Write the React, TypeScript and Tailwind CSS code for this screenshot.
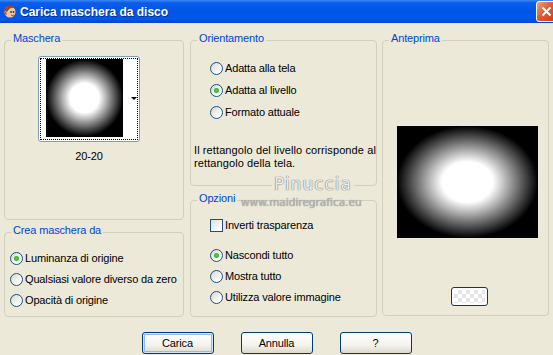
import React from "react";

function Radio({ checked }: { checked?: boolean }) {
  return (
    <span className="flex h-[13px] w-[13px] shrink-0 items-center justify-center rounded-full border border-[#1C5180] bg-[linear-gradient(135deg,#D6D6CF,#FFFFFF_80%)]">
      {checked && <span className="h-[5px] w-[5px] rounded-full bg-[radial-gradient(circle,#55D055,#21A121)]" />}
    </span>
  );
}

function Option({ label, checked, h = "h-[21px]" }: { label: string; checked?: boolean; h?: string }) {
  return (
    <div className={"flex items-center gap-[2px] " + h}>
      <Radio checked={checked} />
      <span className="whitespace-nowrap">{label}</span>
    </div>
  );
}

function Group({ title, className, children }: { title: string; className: string; children?: React.ReactNode }) {
  return (
    <fieldset className={"min-w-0 rounded-[4px] border border-[#D0D0BF] " + className}>
      <legend className="ml-[6px] px-[2px] pb-[3px] leading-[13px] text-[#0046D5]">{title}</legend>
      {children}
    </fieldset>
  );
}

function XpButton({ label, primary }: { label: string; primary?: boolean }) {
  return (
    <button
      className={
        "h-[22px] w-[72px] rounded-[3px] border border-[#003C74] bg-[linear-gradient(180deg,#FFFFFF,#F4F3EE_60%,#DCD8CC)] leading-[13px] " +
        (primary ? "shadow-[inset_0_0_0_1px_#CEE7FF,inset_0_0_0_2px_#98B8EA]" : "")
      }
    >
      {label}
    </button>
  );
}

function AppIcon() {
  return (
    <svg width="15" height="15" viewBox="0 0 15 15">
      <circle cx="8" cy="8" r="5.5" fill="#F3C7A0" />
      <path d="M2 6 C3 1 10 0 13 4 C10 3 7 4 5 8 C4 7 3 7 2 6 Z" fill="#9A4B25" />
      <path d="M1 9 L4 7 L5 11 Z" fill="#E04A2A" />
      <circle cx="9" cy="8" r="0.9" fill="#333" />
      <circle cx="11.5" cy="8" r="0.9" fill="#333" />
      <path d="M9 11 Q10.5 12.2 12 11" stroke="#B03020" strokeWidth="0.9" fill="none" />
    </svg>
  );
}

export default function App() {
  return (
    <div className="relative h-[355px] w-[553px] overflow-hidden bg-[#ECE9D8] font-['Liberation_Sans',Arial,sans-serif] text-[11px] tracking-[-0.15px] text-black">
      {/* title bar */}
      <div className="flex h-[23px] items-center bg-[linear-gradient(180deg,#3B8AF6_0%,#0A5CEA_12%,#0055E5_50%,#0058EE_82%,#0045CF_100%)] pl-[2px]">
        <AppIcon />
        <span className="ml-[3px] text-[12px] font-bold tracking-normal text-white [text-shadow:1px_1px_0_#0A2D8A]">
          Carica maschera da disco
        </span>
        <div className="ml-auto mr-[-4px] flex h-[21px] w-[21px] items-center justify-center rounded-[3px] border border-white bg-[linear-gradient(135deg,#F0A080,#E05A35_45%,#C83C1C)]">
          <svg width="11" height="11" viewBox="0 0 11 11">
            <path d="M1.5 1.5 L9.5 9.5 M9.5 1.5 L1.5 9.5" stroke="#FFFFFF" strokeWidth="2" />
          </svg>
        </div>
      </div>

      <div className="flex px-[4px] pt-[9px]">
        {/* left column */}
        <div className="flex w-[180px] flex-col gap-[4px]">
          <Group title="Maschera" className="h-[188px]">
            <div className="ml-[33px] flex w-[102px] flex-col items-center pt-[8px]">
              <div className="h-[86px] w-[102px] rounded-[3px] border border-[#7F9DB9] bg-white p-[1px]">
                <div className="flex h-full items-start border border-dotted border-black pl-[5px]">
                  <div className="h-[78px] w-[78px] bg-[radial-gradient(circle_closest-side,#FFFFFF_38%,#000000_100%)]" />
                  <div className="ml-[8px] mt-[38px] h-0 w-0 border-x-[3px] border-t-[3px] border-x-transparent border-t-black" />
                </div>
              </div>
              <div className="mt-[8px] leading-[13px]">20-20</div>
            </div>
          </Group>
          <Group title="Crea maschera da" className="h-[93px]">
            <div className="pl-[5px] pt-[8px]">
              <Option label="Luminanza di origine" checked />
              <Option label="Qualsiasi valore diverso da zero" />
              <Option label="Opacità di origine" />
            </div>
          </Group>
        </div>

        {/* middle column */}
        <div className="ml-[6px] flex w-[187px] flex-col gap-[6px]">
          <Group title="Orientamento" className="h-[154px]">
            <div className="pl-[19px] pt-[9px]">
              <Option label="Adatta alla tela" h="h-[22px]" />
              <Option label="Adatta al livello" checked h="h-[22px]" />
              <Option label="Formato attuale" h="h-[22px]" />
            </div>
            <p className="mt-[21px] whitespace-nowrap pl-[3px] leading-[13px] tracking-[0.1px]">
              Il rettangolo del livello corrisponde al
              <br />
              rettangolo della tela.
            </p>
          </Group>
          <Group title="Opzioni" className="h-[125px]">
            <div className="pl-[19px] pt-[9px]">
              <div className="flex h-[16px] items-center gap-[2px]">
                <span className="h-[13px] w-[13px] shrink-0 border border-[#1C5180] bg-[linear-gradient(135deg,#DCDCD7,#FFFFFF_80%)]" />
                <span>Inverti trasparenza</span>
              </div>
              <div className="mt-[12px]">
                <Option label="Nascondi tutto" checked />
                <Option label="Mostra tutto" />
                <Option label="Utilizza valore immagine" />
              </div>
            </div>
          </Group>
        </div>

        {/* right column */}
        <div className="ml-[5px] w-[167px]">
          <Group title="Anteprima" className="h-[284px]">
            <div className="pl-[14px] pt-[78px]">
              <div className="h-[112px] w-[141px] bg-[radial-gradient(ellipse_closest-side,#FFFFFF_36%,#000000_100%)]" />
              <div className="ml-[54px] mt-[49px] h-[19px] w-[37px] rounded-[3px] border border-[#003C74] bg-white p-[2px]">
                <div className="h-full w-full bg-[conic-gradient(#E4E4E4_25%,#FFFFFF_0_50%,#E4E4E4_0_75%,#FFFFFF_0)] bg-[length:8px_8px]" />
              </div>
            </div>
          </Group>
        </div>
      </div>

      <div className="mt-[15px] flex justify-center gap-[27px]">
        <XpButton label="Carica" primary />
        <XpButton label="Annulla" />
        <XpButton label="?" />
      </div>

      {/* watermark */}
      <div className="absolute left-[272px] top-[175px] bg-[#ECE9D8] px-[2px] font-['DejaVu_Sans',sans-serif] text-[17px] leading-[18px] tracking-[1px] text-[#EDEDED] [text-shadow:0_0_1px_#707070,0_0_1px_#707070]">
        Pinuccia
      </div>
      <div className="absolute left-[241px] top-[196px] font-['DejaVu_Sans',sans-serif] text-[10.5px] leading-[12px] tracking-normal text-[#B8B8B8] [text-shadow:0_0_1px_#7A7A7A]">
        www.maidiregrafica.eu
      </div>
    </div>
  );
}
